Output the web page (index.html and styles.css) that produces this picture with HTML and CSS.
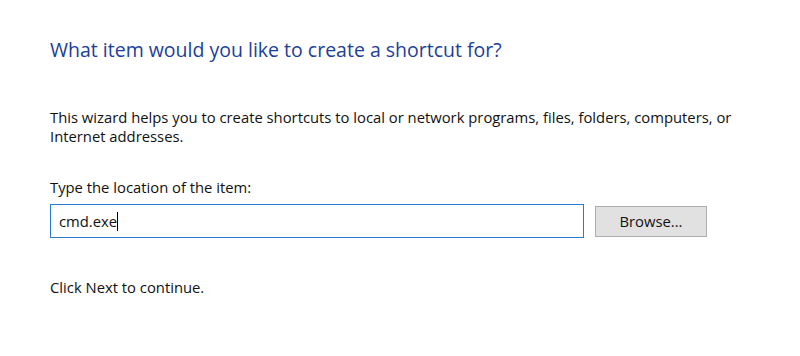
FILE: index.html
```html
<!DOCTYPE html>
<html>
<head>
<meta charset="utf-8">
<link rel="stylesheet" href="styles.css">
</head>
<body>
<div class="page">
  <h1 class="title">What item would you like to create a shortcut for?</h1>
  <p class="intro">This wizard helps you to create shortcuts to local or network programs, files, folders, computers, or Internet addresses.</p>
  <div class="field">
    <label class="label">Type the location of the item:</label>
    <div class="row">
      <div class="input"><span>cmd.exe</span><span class="caret"></span></div>
      <button class="btn">Browse...</button>
    </div>
  </div>
  <p class="next">Click Next to continue.</p>
</div>
</body>
</html>
```
FILE: styles.css
```css
html, body {
  margin: 0;
  padding: 0;
  background: #ffffff;
}
body {
  font-family: "Open Sans", "Noto Sans", sans-serif;
  color: #111111;
  width: 800px;
  height: 356px;
  overflow: hidden;
}
.page {
  padding: 36px 0 0 50px;
  display: flex;
  flex-direction: column;
}
.title {
  margin: 0;
  font-size: 19.5px;
  font-weight: 400;
  color: #1d3e99;
  line-height: 28px;
}
.intro {
  margin: 44px 0 0 0;
  width: 700px;
  font-size: 14.8px;
  line-height: 19px;
}
.field {
  margin-top: 32px;
  display: flex;
  flex-direction: column;
}
.label {
  font-size: 14.8px;
  line-height: 19px;
}
.row {
  margin-top: 7px;
  display: flex;
  align-items: center;
  gap: 11px;
}
.input {
  box-sizing: border-box;
  width: 534px;
  height: 34px;
  border: 1.5px solid #2a7bd4;
  display: flex;
  align-items: center;
  padding-left: 8px;
  font-size: 14.8px;
}
.caret {
  display: inline-block;
  width: 1px;
  height: 19px;
  background: #000;
}
.btn {
  box-sizing: border-box;
  width: 112px;
  height: 31px;
  background: #e1e1e1;
  border: 1px solid #adadad;
  font-family: inherit;
  font-size: 14.8px;
  color: #111111;
  padding: 0;
}
.next {
  margin: 40px 0 0 0;
  font-size: 14.8px;
  line-height: 19px;
}
```
